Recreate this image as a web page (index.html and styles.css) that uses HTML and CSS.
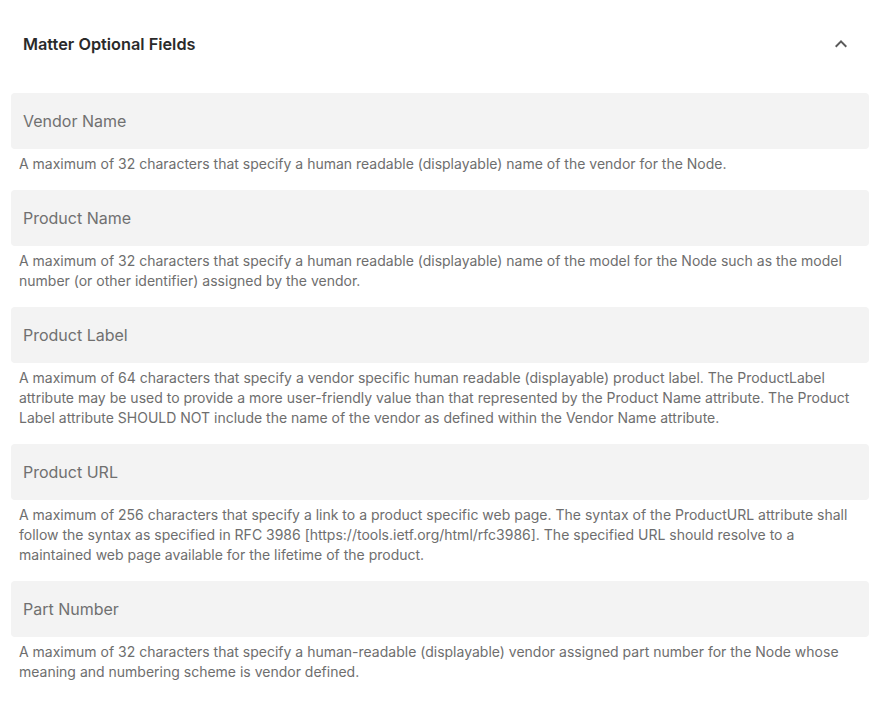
FILE: index.html
```html
<!DOCTYPE html>
<html>
<head>
<meta charset="utf-8">
<link rel="stylesheet" href="styles.css">
</head>
<body>
<section class="panel">
  <div class="panel-header">
    <h2 class="panel-title">Matter Optional Fields</h2>
    <svg class="chevron" width="24" height="24" viewBox="0 0 24 24"><path d="M7.41 15.41 12 10.83l4.59 4.58L18 14l-6-6-6 6z" fill="#5a5a5a"/></svg>
  </div>
  <div class="fields">
    <div class="field">
      <div class="input"><span class="label">Vendor Name</span></div>
      <p class="helper">A maximum of 32 characters that specify a human readable (displayable) name of the vendor for the Node.</p>
    </div>
    <div class="field">
      <div class="input"><span class="label">Product Name</span></div>
      <p class="helper">A maximum of 32 characters that specify a human readable (displayable) name of the model for the Node such as the model number (or other identifier) assigned by the vendor.</p>
    </div>
    <div class="field">
      <div class="input"><span class="label">Product Label</span></div>
      <p class="helper">A maximum of 64 characters that specify a vendor specific human readable (displayable) product label. The ProductLabel attribute may be used to provide a more user-friendly value than that represented by the Product Name attribute. The Product Label attribute SHOULD NOT include the name of the vendor as defined within the Vendor Name attribute.</p>
    </div>
    <div class="field">
      <div class="input"><span class="label">Product URL</span></div>
      <p class="helper">A maximum of 256 characters that specify a link to a product specific web page. The syntax of the ProductURL attribute shall follow the syntax as specified in RFC 3986 [https://tools.ietf.org/html/rfc3986]. The specified URL should resolve to a maintained web page available for the lifetime of the product.</p>
    </div>
    <div class="field">
      <div class="input"><span class="label">Part Number</span></div>
      <p class="helper">A maximum of 32 characters that specify a human-readable (displayable) vendor assigned part number for the Node whose meaning and numbering scheme is vendor defined.</p>
    </div>
  </div>
</section>
</body>
</html>
```
FILE: styles.css
```css
html, body {
  margin: 0;
  padding: 0;
  background: #ffffff;
}
body {
  font-family: Inter, "Noto Sans", sans-serif;
  color: #333;
}
.panel {
  padding: 0 13px 0 11px;
}
.panel-header {
  height: 88px;
  display: flex;
  align-items: center;
  justify-content: space-between;
  padding: 0 16px 0 12px;
}
.panel-title {
  margin: 0;
  font-size: 16.3px;
  font-weight: 600;
  color: #2a2a2a;
}
.chevron {
  display: block;
}
.fields {
  display: flex;
  flex-direction: column;
  gap: 16px;
  padding-top: 5px;
}
.input {
  height: 56px;
  background: #f3f3f3;
  border-radius: 4px;
  display: flex;
  align-items: center;
  padding: 0 12px;
}
.label {
  font-size: 16px;
  color: #707070;
}
.helper {
  margin: 5px 12px 0 8px;
  font-size: 14px;
  line-height: 20px;
  color: #6e6e6e;
}
```
